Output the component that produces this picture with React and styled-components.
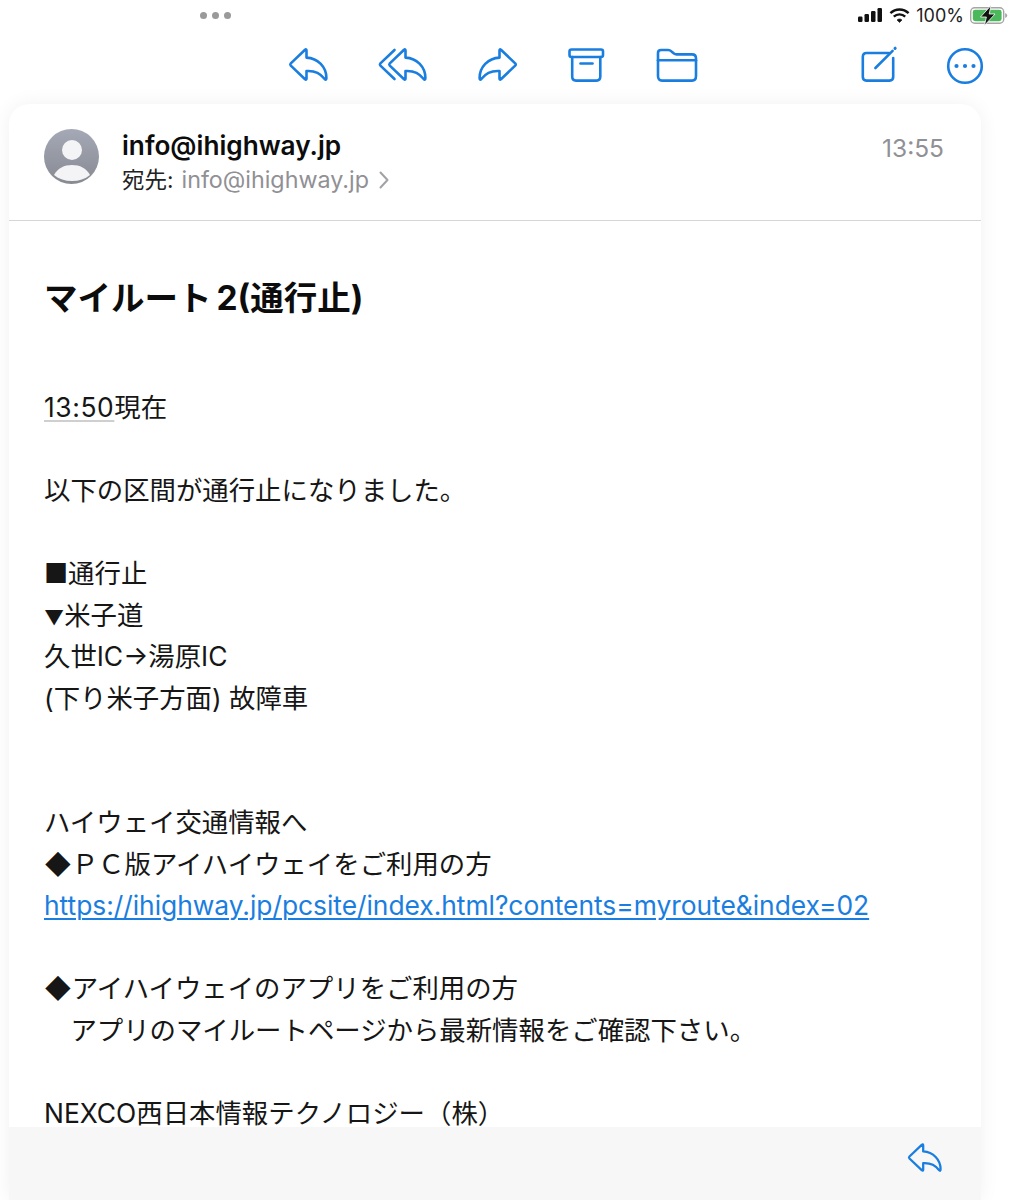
import React from "react";
import styled, { createGlobalStyle } from "styled-components";

const FONT = `Inter, "Noto Sans CJK JP", sans-serif`;
const BLUE = "#1a7ee0";

const Global = createGlobalStyle`
  html, body { margin: 0; padding: 0; background: #fff; }
  * { box-sizing: border-box; }
  body { font-family: ${FONT}; color: #111; }
`;

const Page = styled.div`
  width: 1016px;
  height: 1200px;
  overflow: hidden;
  display: flex;
  flex-direction: column;
  background: #fff;
`;
const StatusBar = styled.div`
  height: 30px;
  flex: none;
  display: flex;
  align-items: center;
  padding: 0 8px 0 200px;
`;
const Dots = styled.div`
  display: flex;
  gap: 5px;
  margin-right: auto;
`;
const Dot = styled.span`
  width: 7px;
  height: 7px;
  border-radius: 50%;
  background: #9a9a9a;
`;
const Status = styled.div`
  display: flex;
  align-items: center;
  gap: 6px;
  font-size: 18px;
  color: #222;
`;
const StatusIcon = styled.svg`
  display: block;
  flex: none;
  overflow: visible;
`;
const Toolbar = styled.div`
  height: 74px;
  flex: none;
  display: flex;
  align-items: flex-start;
  gap: 50px;
  padding: 17px 32px 0 288px;
`;
const ToolIcon = styled.svg`
  display: block;
  flex: none;
  overflow: visible;
  fill: none;
  stroke: ${BLUE};
  stroke-width: 2.6;
  stroke-linejoin: round;
  stroke-linecap: round;
  margin-left: ${(p) => p.$push || 0};
`;
const Card = styled.div`
  margin: 0 35px 0 9px;
  flex: 1;
  min-height: 0;
  display: flex;
  flex-direction: column;
  background: #fff;
  border-radius: 20px 20px 0 0;
  box-shadow: 0 0 20px rgba(0, 0, 0, 0.06);
  overflow: hidden;
`;
const Header = styled.div`
  height: 117px;
  flex: none;
  display: flex;
  align-items: flex-start;
  padding: 25px 37px 0 35px;
  border-bottom: 1px solid #d6d6d6;
`;
const Avatar = styled.svg`
  display: block;
  flex: none;
  margin-right: 23px;
`;
const Sender = styled.div`
  flex: 1;
`;
const Name = styled.div`
  font-size: 26.2px;
  font-weight: 600;
  line-height: 34px;
  color: #0c0c0c;
`;
const ToRow = styled.div`
  display: flex;
  align-items: center;
  font-size: 22.5px;
  line-height: 34px;
  color: #222;
`;
const ToAddress = styled.span`
  color: #909095;
  font-size: 23.3px;
  margin-left: 8px;
`;
const Chevron = styled.svg`
  display: block;
  margin-left: 10px;
  fill: none;
  stroke: #a2a2a6;
  stroke-width: 2;
  stroke-linecap: round;
  stroke-linejoin: round;
`;
const Time = styled.div`
  font-size: 24.5px;
  line-height: 30px;
  padding-top: 4px;
  color: #909095;
`;
const Content = styled.div`
  flex: 1;
  min-height: 0;
  overflow: hidden;
  padding: 54px 36px 0 35px;
`;
const Subject = styled.h1`
  margin: 0 0 66px;
  font-size: 33.5px;
  font-weight: 700;
  line-height: 46px;
  word-spacing: -3px;
  color: #0c0c0c;
`;
const Message = styled.div`
  font-size: 26.4px;
  line-height: 41.5px;
  white-space: pre-wrap;
  color: #161616;
`;
const TimeMark = styled.span`
  letter-spacing: 0.6px;
  text-decoration: underline #cfcfcf 2px;
  text-underline-offset: 3px;
`;
const SmallGlyph = styled.span`
  font-size: 20px;
  line-height: 0;
`;
const MailLink = styled.span`
  color: ${BLUE};
  letter-spacing: -0.03px;
  text-decoration: underline;
  text-decoration-thickness: 2px;
  text-underline-offset: 3px;
`;
const Footer = styled.div`
  height: 73px;
  flex: none;
  display: flex;
  justify-content: flex-end;
  padding: 15px 39px 0 0;
  background: #f7f7f7;
`;

const REPLY =
  "M18.5 3.6Q18.5 1.6 16.8 3L2.8 16.4Q1.8 17.5 2.8 18.6L16.8 32Q18.5 33.4 18.5 31.4L18.5 24C26 23.5 32.5 26.5 36.5 31.8Q38.4 33.8 38.4 31C38.4 20 30 11.2 18.5 10.6Z";

const ReplyIcon = ({ width = 40, height = 35 }) => (
  <ToolIcon width={width} height={height} viewBox="0 0 40 35">
    <path d={REPLY} />
  </ToolIcon>
);
const ReplyAllIcon = () => (
  <ToolIcon width="50" height="35" viewBox="0 0 50 35">
    <path d="M16.5 3L2.4 16.4Q1.4 17.5 2.4 18.6L16.5 32" />
    <path transform="translate(9 0)" d={REPLY} />
  </ToolIcon>
);
const ForwardIcon = () => (
  <ToolIcon width="40" height="35" viewBox="0 0 40 35">
    <path transform="matrix(-1 0 0 1 40 0)" d={REPLY} />
  </ToolIcon>
);
const ArchiveIcon = () => (
  <ToolIcon width="38" height="35" viewBox="0 0 38 35">
    <rect x="1.5" y="2.5" width="33.5" height="7.5" rx="2" />
    <path d="M4.2 10V29.5Q4.2 33.6 8 33.6H28.5Q32.3 33.6 32.3 29.5V10" />
    <path d="M12.5 16.5H24.5" />
  </ToolIcon>
);
const FolderIcon = () => (
  <ToolIcon width="42" height="35" viewBox="0 0 42 35">
    <path d="M2 13V6Q2 3 5 3H12Q14 3 15.5 4.4L18 6.6Q19 7.4 20.5 7.4H36Q40 7.4 40 11.5V29Q40 33.6 36 33.6H6Q2 33.6 2 29Z" />
    <path d="M2 13.2H40" />
  </ToolIcon>
);
const ComposeIcon = () => (
  <ToolIcon $push="auto" width="35" height="36" viewBox="0 0 35 36">
    <path d="M28 6H5.5Q1.8 6 1.8 10V29.8Q1.8 33.6 5.5 33.6H28.5Q32.2 33.6 32.2 29.8V11" />
    <path d="M14.4 21L31.6 3.8" />
    <path d="M34 1.4L34.2 1.2" strokeWidth="3" />
  </ToolIcon>
);
const MoreIcon = () => (
  <ToolIcon width="38" height="38" viewBox="0 0 38 38">
    <circle cx="19" cy="19" r="16.8" />
    <circle cx="10.5" cy="19" r="2.1" fill={BLUE} stroke="none" />
    <circle cx="19" cy="19" r="2.1" fill={BLUE} stroke="none" />
    <circle cx="27.5" cy="19" r="2.1" fill={BLUE} stroke="none" />
  </ToolIcon>
);

export default function App() {
  return (
    <Page>
      <Global />
      <StatusBar>
        <Dots>
          <Dot />
          <Dot />
          <Dot />
        </Dots>
        <Status>
          <StatusIcon width="25" height="14" viewBox="0 0 25 14" fill="#111">
            <rect x="0" y="8.5" width="4.5" height="5.5" rx="1.2" />
            <rect x="6.5" y="6" width="4.5" height="8" rx="1.2" />
            <rect x="13" y="3" width="4.5" height="11" rx="1.2" />
            <rect x="19.5" y="0" width="4.5" height="14" rx="1.2" />
          </StatusIcon>
          <StatusIcon width="21" height="15" viewBox="0 0 21 15" fill="none" stroke="#111" strokeWidth="2.4">
            <path d="M1.4 5.2C6.6 0.2 14.4 0.2 19.6 5.2" />
            <path d="M4.8 8.6C8 5.6 13 5.6 16.2 8.6" />
            <path d="M8 12L10.5 14.4L13 12C11.6 10.6 9.4 10.6 8 12Z" fill="#111" strokeWidth="0.6" />
          </StatusIcon>
          <span>100%</span>
          <StatusIcon width="38" height="17" viewBox="0 0 38 17">
            <rect x="0.7" y="0.7" width="33" height="15.6" rx="4" fill="none" stroke="#a5a5a5" strokeWidth="1.4" />
            <rect x="2.8" y="2.8" width="28.8" height="11.4" rx="2.4" fill="#4cb85c" />
            <path d="M35.2 6Q37.2 6.8 37.2 8.5Q37.2 10.2 35.2 11Z" fill="#a5a5a5" />
            <path d="M21 -1.5L10.5 10H16.4L14.4 18.5L25 7H19.2Z" fill="#111" stroke="#fff" strokeWidth="0.8" />
          </StatusIcon>
        </Status>
      </StatusBar>
      <Toolbar>
        <ReplyIcon />
        <ReplyAllIcon />
        <ForwardIcon />
        <ArchiveIcon />
        <FolderIcon />
        <ComposeIcon />
        <MoreIcon />
      </Toolbar>
      <Card>
        <Header>
          <Avatar width="55" height="55" viewBox="0 0 55 55">
            <defs>
              <linearGradient id="avatarFill" x1="0" y1="0" x2="0" y2="1">
                <stop offset="0" stopColor="#a5a9b6" />
                <stop offset="1" stopColor="#878a92" />
              </linearGradient>
            </defs>
            <circle cx="27.5" cy="27.5" r="27.5" fill="url(#avatarFill)" />
            <circle cx="28" cy="21" r="10" fill="#f4f4f6" />
            <path d="M10 46C14 39 20 36 28 36C36 36 42 39 46 46C41 50 35 52 28 52C21 52 15 50 10 46Z" fill="#f4f4f6" />
          </Avatar>
          <Sender>
            <Name>info@ihighway.jp</Name>
            <ToRow>
              宛先:
              <ToAddress>info@ihighway.jp</ToAddress>
              <Chevron width="10" height="18" viewBox="0 0 10 18">
                <path d="M1.5 1.5L8.5 9L1.5 16.5" />
              </Chevron>
            </ToRow>
          </Sender>
          <Time>13:55</Time>
        </Header>
        <Content>
          <Subject>マイルート 2(通行止)</Subject>
          <Message>
            <TimeMark>13:50</TimeMark>
            {`現在

以下の区間が通行止になりました。

■通行止
`}
            <SmallGlyph>▼</SmallGlyph>
            {`米子道
久世IC→湯原IC
(下り米子方面) 故障車


ハイウェイ交通情報へ
◆ＰＣ版アイハイウェイをご利用の方
`}
            <MailLink>https://ihighway.jp/pcsite/index.html?contents=myroute&amp;index=02</MailLink>
            {`

◆アイハイウェイのアプリをご利用の方
　アプリのマイルートページから最新情報をご確認下さい。

NEXCO西日本情報テクノロジー（株）`}
          </Message>
        </Content>
        <Footer>
          <ReplyIcon width={35} height={31} />
        </Footer>
      </Card>
    </Page>
  );
}
